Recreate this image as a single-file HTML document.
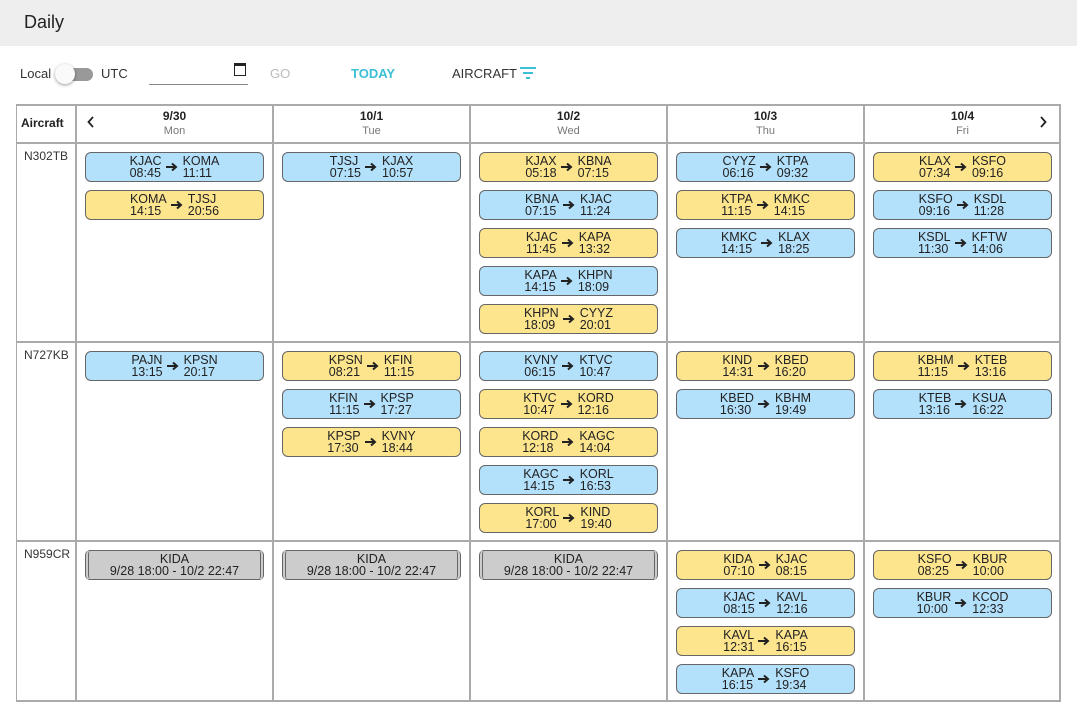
<!DOCTYPE html><html><head><meta charset="utf-8"><style>
body{margin:0;width:1077px;height:717px;background:#fff;font-family:"Liberation Sans",sans-serif;color:#333;position:relative;overflow:hidden}
.hdr{position:absolute;left:0;top:0;width:1077px;height:46px;background:#eee;}
.hdr span{position:absolute;left:24px;top:12px;font-size:18px;color:#222}
.a{position:absolute;white-space:nowrap}
.l{position:absolute;background:#aaa}
.c{position:absolute;width:177px;height:28px;border:1px solid #666;border-radius:6px;display:flex;justify-content:center;align-items:center;font-size:12.5px;line-height:12px;color:#222}
.b{background:#b3e0fb}.y{background:#fde58e}
.c svg{margin:0 5px 0 4px}
.g{background:#ccc;flex-direction:column;border-left:4px double #666;border-right:4px double #666;width:171px;border-radius:5px}
.h{position:absolute;text-align:center;font-size:12px;width:197px}
.h b{display:block;color:#222}.h i{font-style:normal;color:#777;font-size:11px}
</style></head><body>
<svg width="0" height="0" style="position:absolute"><defs><symbol id="ar" viewBox="0 0 12 10"><path d="M0 5h10M6 1.5l4 3.5-4 3.5" stroke="#222" stroke-width="2" fill="none"/></symbol></defs></svg>
<div class="hdr"><span>Daily</span></div>
<div class="a" style="left:20px;top:66px;font-size:13px">Local</div>
<div class="a" style="left:60px;top:68px;width:33px;height:13px;border-radius:7px;background:#999"></div>
<div class="a" style="left:55px;top:64px;width:20px;height:20px;border-radius:50%;background:#fafafa;box-shadow:0 1px 3px rgba(0,0,0,.4)"></div>
<div class="a" style="left:101px;top:66px;font-size:13px">UTC</div>
<div class="a" style="left:149px;top:84px;width:99px;height:1px;background:#888"></div>
<div class="a" style="left:234px;top:63px;width:10px;height:9px;border:1px solid #222;border-top-width:3px"></div>
<div class="a" style="left:270px;top:66px;font-size:13px;color:#bbb">GO</div>
<div class="a" style="left:351px;top:66px;font-size:13px;color:#3bbfd6;font-weight:bold">TODAY</div>
<div class="a" style="left:452px;top:66px;font-size:13px">AIRCRAFT</div>
<svg class="a" style="left:519px;top:66px" width="18" height="14"><path d="M1 2h16M4 7h10M7 12h4" stroke="#3bbfd6" stroke-width="2"/></svg>
<div class="l" style="left:16px;top:104px;width:1045px;height:2px"></div>
<div class="l" style="left:16px;top:142px;width:1045px;height:2px"></div>
<div class="l" style="left:16px;top:341px;width:1045px;height:2px"></div>
<div class="l" style="left:16px;top:540px;width:1045px;height:2px"></div>
<div class="l" style="left:16px;top:700px;width:1045px;height:2px"></div>
<div class="l" style="left:16px;top:104px;width:1px;height:598px"></div>
<div class="l" style="left:75px;top:104px;width:2px;height:598px"></div>
<div class="l" style="left:272px;top:104px;width:2px;height:598px"></div>
<div class="l" style="left:469px;top:104px;width:2px;height:598px"></div>
<div class="l" style="left:666px;top:104px;width:2px;height:598px"></div>
<div class="l" style="left:863px;top:104px;width:2px;height:598px"></div>
<div class="l" style="left:1059px;top:104px;width:2px;height:598px"></div>
<div class="a" style="left:21px;top:116px;font-size:12px;font-weight:bold;color:#222">Aircraft</div>
<svg class="a" style="left:87px;top:116px" width="8" height="12"><path d="M6 1L1.5 6 6 11" stroke="#222" stroke-width="1.8" fill="none"/></svg>
<svg class="a" style="left:1039px;top:116px" width="8" height="12"><path d="M2 1l4.5 5L2 11" stroke="#222" stroke-width="1.8" fill="none"/></svg>
<div class="h" style="left:76px;top:109px"><b>9/30</b><i>Mon</i></div>
<div class="h" style="left:273px;top:109px"><b>10/1</b><i>Tue</i></div>
<div class="h" style="left:470px;top:109px"><b>10/2</b><i>Wed</i></div>
<div class="h" style="left:667px;top:109px"><b>10/3</b><i>Thu</i></div>
<div class="h" style="left:864px;top:109px"><b>10/4</b><i>Fri</i></div>
<div class="a" style="left:24px;top:149px;font-size:12px">N302TB</div>
<div class="a" style="left:24px;top:348px;font-size:12px">N727KB</div>
<div class="a" style="left:24px;top:547px;font-size:12px">N959CR</div>

<div class="c b" style="left:85px;top:152px"><div>KJAC<br>08:45</div><svg width="12" height="10"><use href="#ar"/></svg><div>KOMA<br>11:11</div></div>
<div class="c y" style="left:85px;top:190px"><div>KOMA<br>14:15</div><svg width="12" height="10"><use href="#ar"/></svg><div>TJSJ<br>20:56</div></div>
<div class="c b" style="left:282px;top:152px"><div>TJSJ<br>07:15</div><svg width="12" height="10"><use href="#ar"/></svg><div>KJAX<br>10:57</div></div>
<div class="c y" style="left:479px;top:152px"><div>KJAX<br>05:18</div><svg width="12" height="10"><use href="#ar"/></svg><div>KBNA<br>07:15</div></div>
<div class="c b" style="left:479px;top:190px"><div>KBNA<br>07:15</div><svg width="12" height="10"><use href="#ar"/></svg><div>KJAC<br>11:24</div></div>
<div class="c y" style="left:479px;top:228px"><div>KJAC<br>11:45</div><svg width="12" height="10"><use href="#ar"/></svg><div>KAPA<br>13:32</div></div>
<div class="c b" style="left:479px;top:266px"><div>KAPA<br>14:15</div><svg width="12" height="10"><use href="#ar"/></svg><div>KHPN<br>18:09</div></div>
<div class="c y" style="left:479px;top:304px"><div>KHPN<br>18:09</div><svg width="12" height="10"><use href="#ar"/></svg><div>CYYZ<br>20:01</div></div>
<div class="c b" style="left:676px;top:152px"><div>CYYZ<br>06:16</div><svg width="12" height="10"><use href="#ar"/></svg><div>KTPA<br>09:32</div></div>
<div class="c y" style="left:676px;top:190px"><div>KTPA<br>11:15</div><svg width="12" height="10"><use href="#ar"/></svg><div>KMKC<br>14:15</div></div>
<div class="c b" style="left:676px;top:228px"><div>KMKC<br>14:15</div><svg width="12" height="10"><use href="#ar"/></svg><div>KLAX<br>18:25</div></div>
<div class="c y" style="left:873px;top:152px"><div>KLAX<br>07:34</div><svg width="12" height="10"><use href="#ar"/></svg><div>KSFO<br>09:16</div></div>
<div class="c b" style="left:873px;top:190px"><div>KSFO<br>09:16</div><svg width="12" height="10"><use href="#ar"/></svg><div>KSDL<br>11:28</div></div>
<div class="c b" style="left:873px;top:228px"><div>KSDL<br>11:30</div><svg width="12" height="10"><use href="#ar"/></svg><div>KFTW<br>14:06</div></div>

<div class="c b" style="left:85px;top:351px"><div>PAJN<br>13:15</div><svg width="12" height="10"><use href="#ar"/></svg><div>KPSN<br>20:17</div></div>
<div class="c y" style="left:282px;top:351px"><div>KPSN<br>08:21</div><svg width="12" height="10"><use href="#ar"/></svg><div>KFIN<br>11:15</div></div>
<div class="c b" style="left:282px;top:389px"><div>KFIN<br>11:15</div><svg width="12" height="10"><use href="#ar"/></svg><div>KPSP<br>17:27</div></div>
<div class="c y" style="left:282px;top:427px"><div>KPSP<br>17:30</div><svg width="12" height="10"><use href="#ar"/></svg><div>KVNY<br>18:44</div></div>
<div class="c b" style="left:479px;top:351px"><div>KVNY<br>06:15</div><svg width="12" height="10"><use href="#ar"/></svg><div>KTVC<br>10:47</div></div>
<div class="c y" style="left:479px;top:389px"><div>KTVC<br>10:47</div><svg width="12" height="10"><use href="#ar"/></svg><div>KORD<br>12:16</div></div>
<div class="c y" style="left:479px;top:427px"><div>KORD<br>12:18</div><svg width="12" height="10"><use href="#ar"/></svg><div>KAGC<br>14:04</div></div>
<div class="c b" style="left:479px;top:465px"><div>KAGC<br>14:15</div><svg width="12" height="10"><use href="#ar"/></svg><div>KORL<br>16:53</div></div>
<div class="c y" style="left:479px;top:503px"><div>KORL<br>17:00</div><svg width="12" height="10"><use href="#ar"/></svg><div>KIND<br>19:40</div></div>
<div class="c y" style="left:676px;top:351px"><div>KIND<br>14:31</div><svg width="12" height="10"><use href="#ar"/></svg><div>KBED<br>16:20</div></div>
<div class="c b" style="left:676px;top:389px"><div>KBED<br>16:30</div><svg width="12" height="10"><use href="#ar"/></svg><div>KBHM<br>19:49</div></div>
<div class="c y" style="left:873px;top:351px"><div>KBHM<br>11:15</div><svg width="12" height="10"><use href="#ar"/></svg><div>KTEB<br>13:16</div></div>
<div class="c b" style="left:873px;top:389px"><div>KTEB<br>13:16</div><svg width="12" height="10"><use href="#ar"/></svg><div>KSUA<br>16:22</div></div>

<div class="c g" style="left:85px;top:550px"><div>KIDA</div><div>9/28 18:00 - 10/2 22:47</div></div>
<div class="c g" style="left:282px;top:550px"><div>KIDA</div><div>9/28 18:00 - 10/2 22:47</div></div>
<div class="c g" style="left:479px;top:550px"><div>KIDA</div><div>9/28 18:00 - 10/2 22:47</div></div>
<div class="c y" style="left:676px;top:550px"><div>KIDA<br>07:10</div><svg width="12" height="10"><use href="#ar"/></svg><div>KJAC<br>08:15</div></div>
<div class="c b" style="left:676px;top:588px"><div>KJAC<br>08:15</div><svg width="12" height="10"><use href="#ar"/></svg><div>KAVL<br>12:16</div></div>
<div class="c y" style="left:676px;top:626px"><div>KAVL<br>12:31</div><svg width="12" height="10"><use href="#ar"/></svg><div>KAPA<br>16:15</div></div>
<div class="c b" style="left:676px;top:664px"><div>KAPA<br>16:15</div><svg width="12" height="10"><use href="#ar"/></svg><div>KSFO<br>19:34</div></div>
<div class="c y" style="left:873px;top:550px"><div>KSFO<br>08:25</div><svg width="12" height="10"><use href="#ar"/></svg><div>KBUR<br>10:00</div></div>
<div class="c b" style="left:873px;top:588px"><div>KBUR<br>10:00</div><svg width="12" height="10"><use href="#ar"/></svg><div>KCOD<br>12:33</div></div>
</body></html>
